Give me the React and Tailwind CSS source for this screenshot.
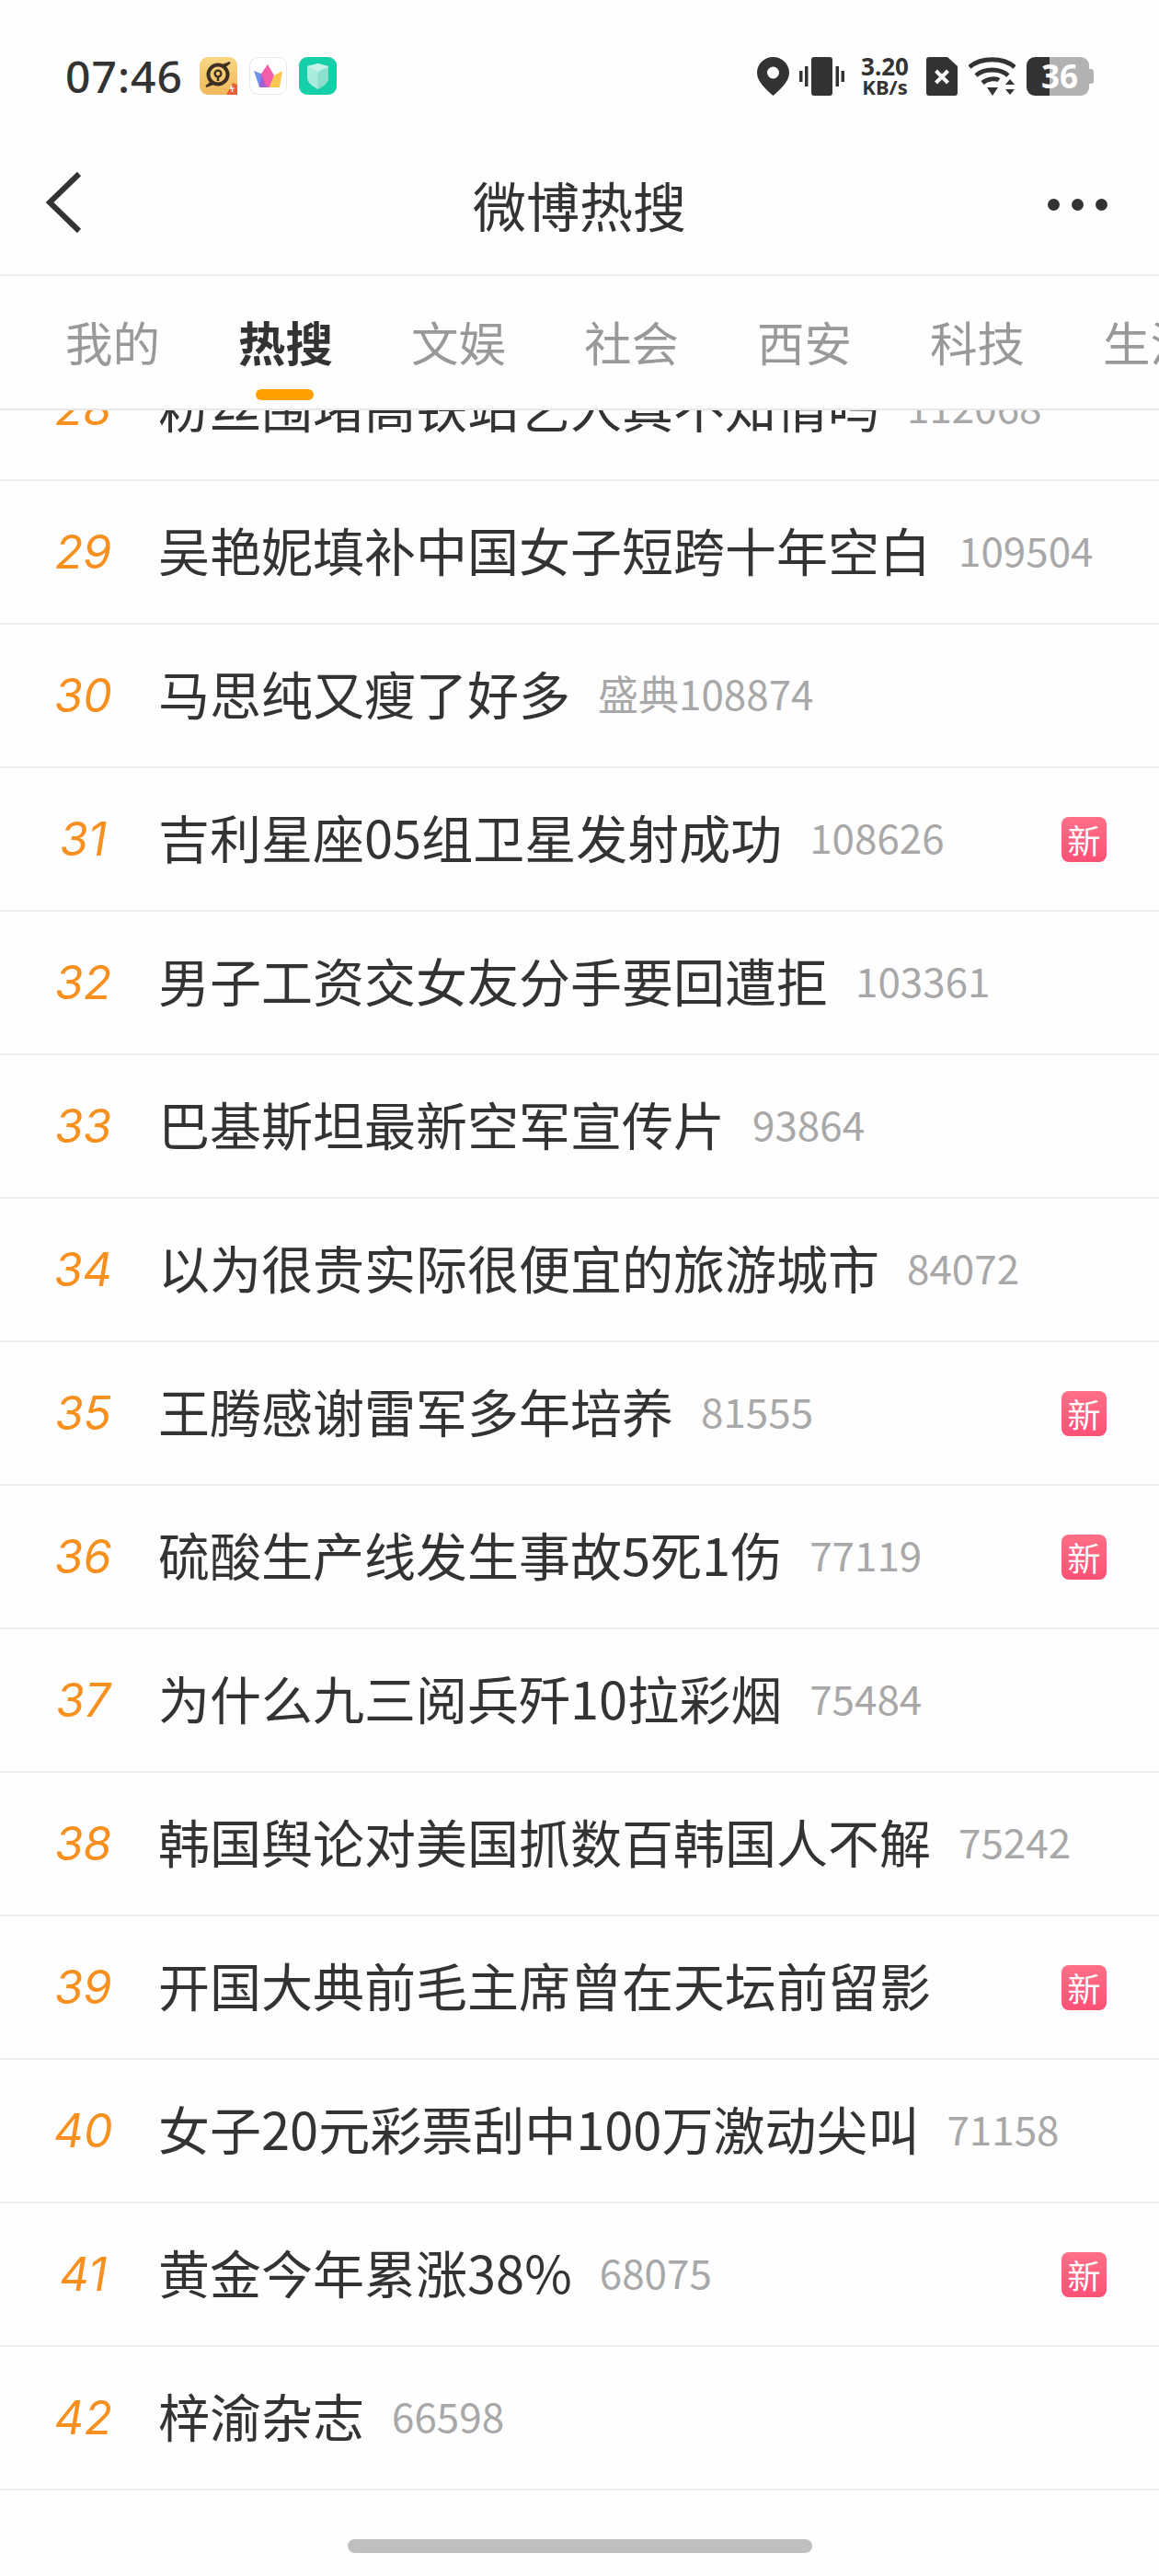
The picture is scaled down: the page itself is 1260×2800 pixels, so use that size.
import React from 'react';

const tabs = ['我的', '热搜', '文娱', '社会', '西安', '科技', '生活'];

const rows = [
  { rank: 28, title: '粉丝围堵高铁站艺人真不知情吗', count: '112068' },
  { rank: 29, title: '吴艳妮填补中国女子短跨十年空白', count: '109504' },
  { rank: 30, title: '马思纯又瘦了好多', count: '盛典108874' },
  { rank: 31, title: '吉利星座05组卫星发射成功', count: '108626', isNew: true },
  { rank: 32, title: '男子工资交女友分手要回遭拒', count: '103361' },
  { rank: 33, title: '巴基斯坦最新空军宣传片', count: '93864' },
  { rank: 34, title: '以为很贵实际很便宜的旅游城市', count: '84072' },
  { rank: 35, title: '王腾感谢雷军多年培养', count: '81555', isNew: true },
  { rank: 36, title: '硫酸生产线发生事故5死1伤', count: '77119', isNew: true },
  { rank: 37, title: '为什么九三阅兵歼10拉彩烟', count: '75484' },
  { rank: 38, title: '韩国舆论对美国抓数百韩国人不解', count: '75242' },
  { rank: 39, title: '开国大典前毛主席曾在天坛前留影', count: '', isNew: true },
  { rank: 40, title: '女子20元彩票刮中100万激动尖叫', count: '71158' },
  { rank: 41, title: '黄金今年累涨38%', count: '68075', isNew: true },
  { rank: 42, title: '梓渝杂志', count: '66598' },
];

const AppIcons = () => (
  <div className="flex items-center gap-[13px] ml-[18px]">
    <svg width="41" height="41" viewBox="0 0 41 41">
      <defs>
        <linearGradient id="gold" x1="0" y1="0" x2="0" y2="1">
          <stop offset="0" stopColor="#f9d684" />
          <stop offset="1" stopColor="#efb95c" />
        </linearGradient>
      </defs>
      <rect width="41" height="41" rx="9" fill="url(#gold)" />
      <circle cx="20" cy="19" r="10.5" fill="none" stroke="#3d2f22" strokeWidth="4" />
      <circle cx="20" cy="18" r="3.4" fill="none" stroke="#3d2f22" strokeWidth="2.4" />
      <path d="M20 21v5" stroke="#3d2f22" strokeWidth="2.4" />
      <path d="M7 32 L13 27 L15 29 Z M33 6 L27 11 L25 9 Z" fill="#3d2f22" stroke="#3d2f22" strokeWidth="2" />
      <path d="M29 41 L41 41 L41 30 L36 28 Z" fill="#e8603c" />
      <path d="M35 31 l-1.5 3 h4 M35.5 34 v4" stroke="#fff" strokeWidth="1.3" fill="none" />
    </svg>
    <svg width="41" height="41" viewBox="0 0 41 41">
      <rect x="0.5" y="0.5" width="40" height="40" rx="9" fill="#fff" stroke="#e8e8e8" />
      <path d="M5 15 L13 18 L19 33 L11 33 Z" fill="#6f94f0" />
      <path d="M20 8 L27 20 L22 33 L11 33 L13 18 Z" fill="#f25fa8" />
      <path d="M36 15 L33 33 L22 33 L27 20 Z" fill="#fcc653" />
      <path d="M13 18 L19 33 L11 33 Z" fill="#a162d8" />
    </svg>
    <svg width="41" height="41" viewBox="0 0 41 41">
      <rect width="41" height="41" rx="9" fill="#15cfa8" />
      <path d="M20.5 7 L32 10 V22 C32 28 26 32 20.5 35 C15 32 9 28 9 22 V10 Z" fill="#a9ebdc" />
      <path d="M20.5 16 L32 11 V22 C32 28 26 32 20.5 35 Z" fill="#8ddfcd" />
      <path d="M9 10 L20.5 7 L32 10 L20.5 16 Z" fill="#c4f2e7" />
    </svg>
  </div>
);

const StatusIcons = () => (
  <div className="flex items-center">
    <svg width="35" height="42" viewBox="0 0 35 42" className="mr-[11px]">
      <path
        fillRule="evenodd"
        d="M17.5 0C7.8 0 0 7.6 0 17c0 10 10 18.500 17.500 25C25 35.500 35 27 35 17 35 7.600 27.200 0 17.500 0Zm0 10.500a6.500 6.500 0 1 1 0 13 6.500 6.500 0 0 1 0-13Z"
        fill="#333"
      />
    </svg>
    <svg width="49" height="42" viewBox="0 0 49 42" className="mr-[18px]">
      <rect x="13" y="0" width="23" height="42" rx="3" fill="#333" />
      <rect x="0" y="15" width="3.500" height="12" fill="#333" />
      <rect x="6" y="10" width="3.500" height="22" fill="#333" />
      <rect x="39.500" y="10" width="3.500" height="22" fill="#333" />
      <rect x="45.500" y="15" width="3.500" height="12" fill="#333" />
    </svg>
    <div className="flex flex-col items-center w-[52px] font-bold text-[#333] mr-[19px] font-['Noto_Sans','Noto_Sans_CJK_SC',sans-serif]">
      <span className="text-[26px] leading-[22px]">3.20</span>
      <span className="text-[22px] leading-[22px]">KB/s</span>
    </div>
    <svg width="34" height="42" viewBox="0 0 34 42" className="mr-[12px]">
      <path d="M3 0H23L34 10V39a3 3 0 0 1-3 3H3a3 3 0 0 1-3-3V3a3 3 0 0 1 3-3Z" fill="#333" />
      <path d="M10.500 15 L23.500 28 M23.500 15 L10.500 28" stroke="#fff" strokeWidth="4" />
    </svg>
    <svg width="51" height="42" viewBox="0 0 51 42" className="mr-[12px]">
      <path d="M1 11 C13 0 38 0 50 11" fill="none" stroke="#333" strokeWidth="5" />
      <path d="M8 20 C17 12 34 12 43 20" fill="none" stroke="#333" strokeWidth="5" />
      <path d="M15 28 C21 23 30 23 33 25" fill="none" stroke="#333" strokeWidth="5" />
      <path d="M20 33 H32 L26 42 Z" fill="#333" />
      <path d="M40 30 L45 24 L50 30 Z M40 35 H50 L45 41 Z" fill="#333" />
    </svg>
    <div className="relative flex h-[42px] w-[74px] items-stretch">
      <div className="w-[25px] rounded-l-[9px] bg-[#333]" />
      <div className="w-[43px] rounded-r-[9px] bg-[#b2b2b2]" />
      <div className="w-[5px] my-[13px] rounded-r-[3px] bg-[#b2b2b2]" />
      <span className="absolute left-[16px] top-0 text-[35px] leading-[42px] font-bold text-white font-['Noto_Sans',sans-serif]">36</span>
    </div>
  </div>
);

const NewBadge = () => (
  <span className="ml-auto mr-[57px] flex h-[49px] w-[49px] shrink-0 items-center justify-center rounded-[8px] bg-gradient-to-b from-[#ff6f86] to-[#fb5076] text-[36px] leading-none text-white">
    新
  </span>
);

const HotRow = ({ rank, title, count, isNew }) => (
  <div className="flex h-[156px] items-center border-b-2 border-[#f0f0f0]">
    <span className="w-[172px] shrink-0 pl-[9px] pb-[1px] text-center text-[50px] italic leading-none text-[#f7901e] font-['Inter',sans-serif]">
      {rank}
    </span>
    <span className="whitespace-nowrap pb-[6px] text-[56px] leading-none text-[#333]">{title}</span>
    {count && <span className="ml-[30px] whitespace-nowrap pb-[7px] text-[44px] leading-none text-[#a8a8a8]">{count}</span>}
    {isNew && <NewBadge />}
  </div>
);

export default function App() {
  return (
    <div className="flex h-[2800px] w-[1260px] flex-col overflow-hidden bg-[#fefefe] font-['Noto_Sans_CJK_SC','Noto_Sans',sans-serif]">
      <div className="relative z-10 bg-[#fefefe]">
        {/* status bar */}
        <div className="flex h-[166px] items-center justify-between pl-[71px] pr-[70px] pb-[1px]">
          <div className="flex items-center">
            <span className="text-[48px] font-medium leading-none tracking-[1px] text-[#333] font-['Noto_Sans',sans-serif]">07:46</span>
            <AppIcons />
          </div>
          <StatusIcons />
        </div>

        {/* nav bar */}
        <div className="relative flex h-[134px] items-center justify-center border-b-2 border-[#efefef]">
          <svg width="40" height="68" viewBox="0 0 40 68" className="absolute left-[49px] top-[20px]">
            <path d="M37 3 L5 34 L37 65" fill="none" stroke="#333" strokeWidth="6" />
          </svg>
          <span className="pb-[20px] text-[58px] leading-none text-[#333]">微博热搜</span>
          <div className="absolute right-[56px] top-[50px] flex gap-[13px]">
            <span className="h-[13px] w-[13px] rounded-full bg-[#333]" />
            <span className="h-[13px] w-[13px] rounded-full bg-[#333]" />
            <span className="h-[13px] w-[13px] rounded-full bg-[#333]" />
          </div>
        </div>

        {/* tabs */}
        <div className="flex h-[146px] gap-[85px] overflow-hidden border-b-2 border-[#e8e8e8] pl-[71px] bg-[#fefefe]">
          {tabs.map((tab, i) => (
            <div key={tab} className="relative shrink-0 pt-[45px]">
              <span className={`block whitespace-nowrap text-[51.5px] leading-none ${i === 1 ? 'font-bold text-[#333]' : 'text-[#999]'}`}>
                {tab}
              </span>
              {i === 1 && <span className="absolute left-[19px] top-[123px] h-[12px] w-[63px] rounded-full bg-[#ffa000]" />}
            </div>
          ))}
        </div>
      </div>

      {/* list, first row scrolled under the tabs */}
      <div className="-mt-[79px]">
        {rows.map((row) => (
          <HotRow key={row.rank} {...row} />
        ))}
      </div>

      <div className="flex justify-center pt-[53px]">
        <div className="h-[15px] w-[505px] rounded-full bg-[#bfbfbf]" />
      </div>
    </div>
  );
}
